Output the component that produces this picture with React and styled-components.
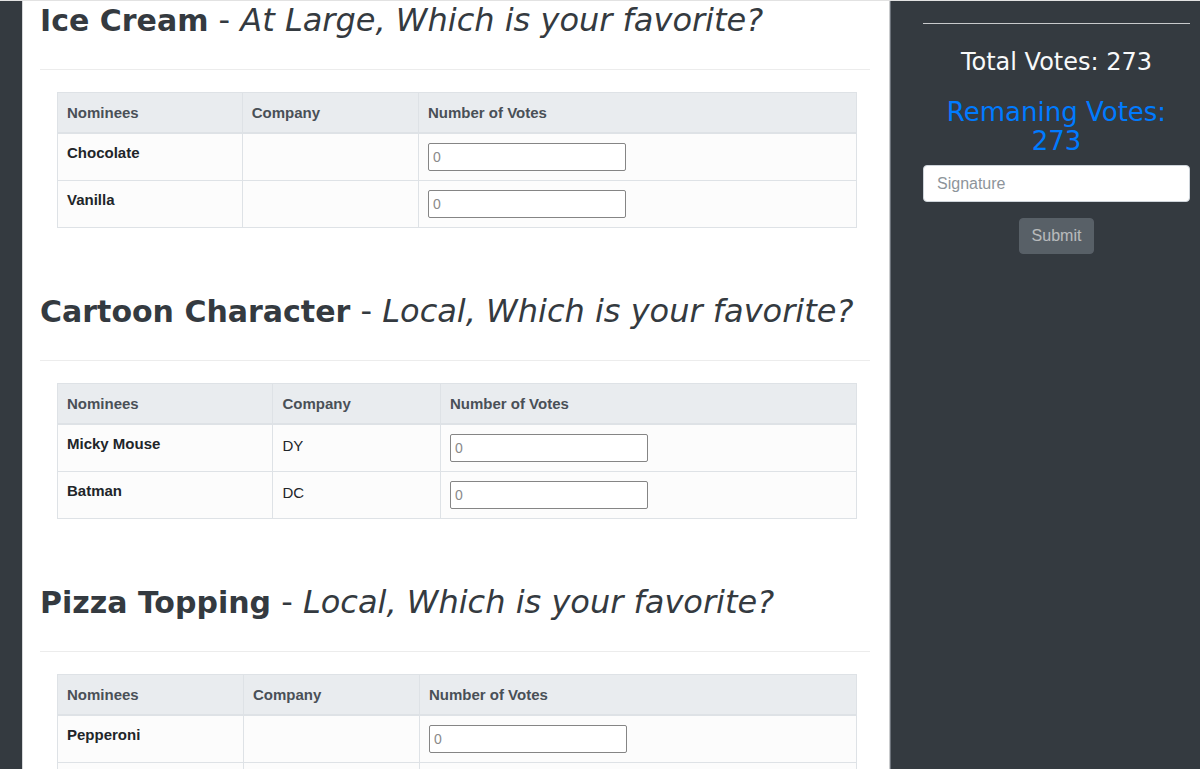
import React from "react";
import styled, { createGlobalStyle } from "styled-components";

const categories = [
  {
    title: "Ice Cream",
    scope: "At Large, Which is your favorite?",
    nominees: [
      { name: "Chocolate", company: "" },
      { name: "Vanilla", company: "" },
    ],
  },
  {
    title: "Cartoon Character",
    scope: "Local, Which is your favorite?",
    nominees: [
      { name: "Micky Mouse", company: "DY" },
      { name: "Batman", company: "DC" },
    ],
  },
  {
    title: "Pizza Topping",
    scope: "Local, Which is your favorite?",
    nominees: [
      { name: "Pepperoni", company: "" },
      { name: "Sausage", company: "" },
    ],
  },
];

function Ballot() {
  return (
    <>
      <GlobalStyle />
      <Page>
        <Gutter />
        <Main>
          {categories.map((cat) => (
            <Section key={cat.title}>
              <Heading>
                <strong>{cat.title}</strong> - <em>{cat.scope}</em>
              </Heading>
              <Rule />
              <Table>
                <thead>
                  <tr>
                    <Th>Nominees</Th>
                    <Th>Company</Th>
                    <Th>Number of Votes</Th>
                  </tr>
                </thead>
                <tbody>
                  {cat.nominees.map((n) => (
                    <tr key={n.name}>
                      <RowHead scope="row">{n.name}</RowHead>
                      <Td>{n.company}</Td>
                      <Td>
                        <VoteInput type="number" placeholder="0" />
                      </Td>
                    </tr>
                  ))}
                </tbody>
              </Table>
            </Section>
          ))}
        </Main>
        <Sidebar>
          <SideRule />
          <Total>Total Votes: 273</Total>
          <Remaining>Remaning Votes: 273</Remaining>
          <Signature placeholder="Signature" />
          <SubmitButton disabled>Submit</SubmitButton>
        </Sidebar>
      </Page>
    </>
  );
}

const GlobalStyle = createGlobalStyle`
  body {
    margin: 0;
    background: #343a40;
    font-family: "Liberation Sans", Arial, sans-serif;
    overflow: hidden;
  }
`;

const Page = styled.div`
  display: flex;
  height: 769px;
  border-top: 1px solid #e2e2e2;
  box-sizing: border-box;
  overflow: hidden;
`;

const Gutter = styled.div`
  width: 22px;
  flex-shrink: 0;
  background: #343a40;
`;

const Main = styled.div`
  width: 868px;
  flex-shrink: 0;
  background: #fff;
  border-left: 1px solid #d6d8da;
  border-right: 1px solid #c9cbcd;
  padding: 0 19px 0 17px;
  box-sizing: border-box;
`;

const Section = styled.section`
  padding-bottom: 64px;
`;

const Heading = styled.h2`
  margin: 0;
  font-family: "DejaVu Sans", sans-serif;
  font-size: 32px;
  line-height: 38px;
  font-weight: 400;
  color: #343a40;
  white-space: nowrap;

  strong {
    font-size: 30px;
    font-weight: 700;
  }

  em {
    font-style: italic;
    font-weight: 400;
  }
`;

const Rule = styled.hr`
  margin: 29px 0 22px;
  border: 0;
  border-top: 1px solid #ececec;
`;

const Table = styled.table`
  width: 800px;
  margin-left: 17px;
  border-collapse: collapse;
  border: 1px solid #dee2e6;
  background: #fcfcfc;
`;

const Th = styled.th`
  text-align: left;
  padding: 10px 9px 9px;
  line-height: 20px;
  font-size: 15px;
  font-weight: 700;
  color: #495057;
  background: #e9ecef;
  border: 1px solid #dee2e6;
  border-bottom-width: 2px;
`;

const RowHead = styled.th`
  text-align: left;
  vertical-align: top;
  padding: 10px 9px;
  font-size: 15px;
  line-height: 18px;
  font-weight: 700;
  color: #212529;
  border: 1px solid #dee2e6;
`;

const Td = styled.td`
  vertical-align: top;
  padding: 9px 9px;
  font-size: 15px;
  line-height: 24px;
  color: #212529;
  border: 1px solid #dee2e6;
`;

const VoteInput = styled.input`
  display: block;
  width: 198px;
  height: 28px;
  box-sizing: border-box;
  border: 1px solid #858585;
  border-radius: 2px;
  padding: 0 4px;
  font-family: "Liberation Sans", Arial, sans-serif;
  font-size: 14px;
  background: #fff;

  &::placeholder {
    color: #8a8a8a;
  }
  &::-webkit-inner-spin-button {
    display: none;
  }
`;

const Sidebar = styled.aside`
  flex: 1;
  background: #343a40;
  border-left: 1px solid #6c727a;
  padding: 22px 10px 0 32px;
  display: flex;
  flex-direction: column;
  align-items: center;
  text-align: center;
`;

const SideRule = styled.hr`
  align-self: stretch;
  margin: 0 0 23px;
  border: 0;
  border-top: 1px solid #c8cacc;
`;

const Total = styled.h3`
  margin: 0 0 21px;
  font-family: "DejaVu Sans", sans-serif;
  font-size: 24px;
  line-height: 30px;
  font-weight: 400;
  color: #f8f9fa;
`;

const Remaining = styled.h3`
  margin: 0 0 9px;
  font-family: "DejaVu Sans", sans-serif;
  font-size: 26px;
  line-height: 29px;
  font-weight: 400;
  color: #007bff;
`;

const Signature = styled.input`
  align-self: stretch;
  height: 37px;
  box-sizing: border-box;
  border: 1px solid #ced4da;
  border-radius: 4px;
  padding: 0 13px;
  font-family: "Liberation Sans", Arial, sans-serif;
  font-size: 16px;
  background: #fff;

  &::placeholder {
    color: #8d949a;
  }
`;

const SubmitButton = styled.button`
  margin-top: 16px;
  width: 75px;
  height: 36px;
  border: 1px solid #6c757d;
  border-radius: 4px;
  background: #6c757d;
  color: #fff;
  font-family: "Liberation Sans", Arial, sans-serif;
  font-size: 16px;
  opacity: 0.65;
`;

export default Ballot;
